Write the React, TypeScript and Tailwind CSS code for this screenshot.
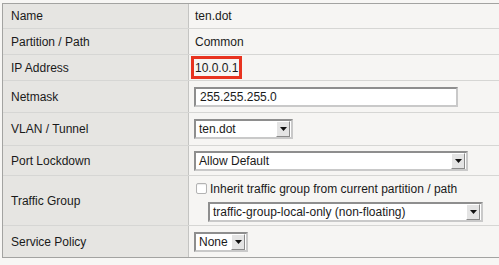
import React from "react";

function Arrow() {
  return (
    <div className="flex h-[16px] w-[14px] items-center justify-center border border-t-[#ffffff] border-l-[#ffffff] border-b-[#8a8a8a] border-r-[#8a8a8a] bg-[#e4e4e4]">
      <svg width="7" height="4" viewBox="0 0 7 4">
        <polygon points="0,0 7,0 3.5,4" fill="#111" />
      </svg>
    </div>
  );
}

function Select({ value, width }: { value: string; width: number }) {
  return (
    <div
      className="flex h-[20px] items-center justify-between border-2 border-t-[#8e8e8e] border-l-[#8e8e8e] border-b-[#c9c9c9] border-r-[#c9c9c9] bg-white pl-[3px] pr-px"
      style={{ width }}
    >
      <span className="leading-none">{value}</span>
      <Arrow />
    </div>
  );
}

function Row({
  label,
  h,
  last,
  children,
}: {
  label: string;
  h: number;
  last?: boolean;
  children: React.ReactNode;
}) {
  return (
    <div
      className={
        "flex " + (last ? "" : "border-b border-[#d6d6d4]")
      }
      style={{ height: h }}
    >
      <div className="flex w-[186px] shrink-0 items-center border-r border-[#c4c4c2] bg-[#e6e5e2] pl-[8px]">
        {label}
      </div>
      <div className="flex flex-1 items-center bg-[#f6f5f3] pl-[5px]">{children}</div>
    </div>
  );
}

export default function App() {
  return (
    <div
      className="h-[265px] w-[499px] overflow-hidden bg-[#f7f6f4] pt-[3px] pl-[2px] text-[12px] text-[#1a1a1a]"
      style={{ fontFamily: '"Liberation Sans", Arial, sans-serif' }}
    >
      <div className="border-t border-l border-b border-[#a3a3a1]">
        <Row label="Name" h={25}>
          <span className="pl-px">ten.dot</span>
        </Row>
        <Row label="Partition / Path" h={26}>
          <span className="pl-px">Common</span>
        </Row>
        <Row label="IP Address" h={26}>
          <div className="-ml-[3px] flex h-[23px] items-center border-[3px] border-[#e8331f] px-[1px]">
            10.0.0.1
          </div>
        </Row>
        <Row label="Netmask" h={32}>
          <div className="flex h-[20px] w-[264px] items-center border-2 border-t-[#8e8e8e] border-l-[#8e8e8e] border-b-[#c9c9c9] border-r-[#c9c9c9] bg-white pl-[4px]">
            255.255.255.0
          </div>
        </Row>
        <Row label="VLAN / Tunnel" h={33}>
          <Select value="ten.dot" width={99} />
        </Row>
        <Row label="Port Lockdown" h={30}>
          <Select value="Allow Default" width={274} />
        </Row>
        <Row label="Traffic Group" h={50}>
          <div className="flex flex-col gap-[4px]">
            <div className="flex items-center gap-[3px]">
              <div className="ml-[2px] h-[11px] w-[11px] rounded-[2px] border border-[#b3b3b3] bg-white shadow-[inset_0_1px_1px_rgba(0,0,0,0.08)]" />
              <span>Inherit traffic group from current partition / path</span>
            </div>
            <div className="ml-[14px]">
              <Select value="traffic-group-local-only (non-floating)" width={275} />
            </div>
          </div>
        </Row>
        <Row label="Service Policy" h={31} last>
          <Select value="None" width={54} />
        </Row>
      </div>
    </div>
  );
}
